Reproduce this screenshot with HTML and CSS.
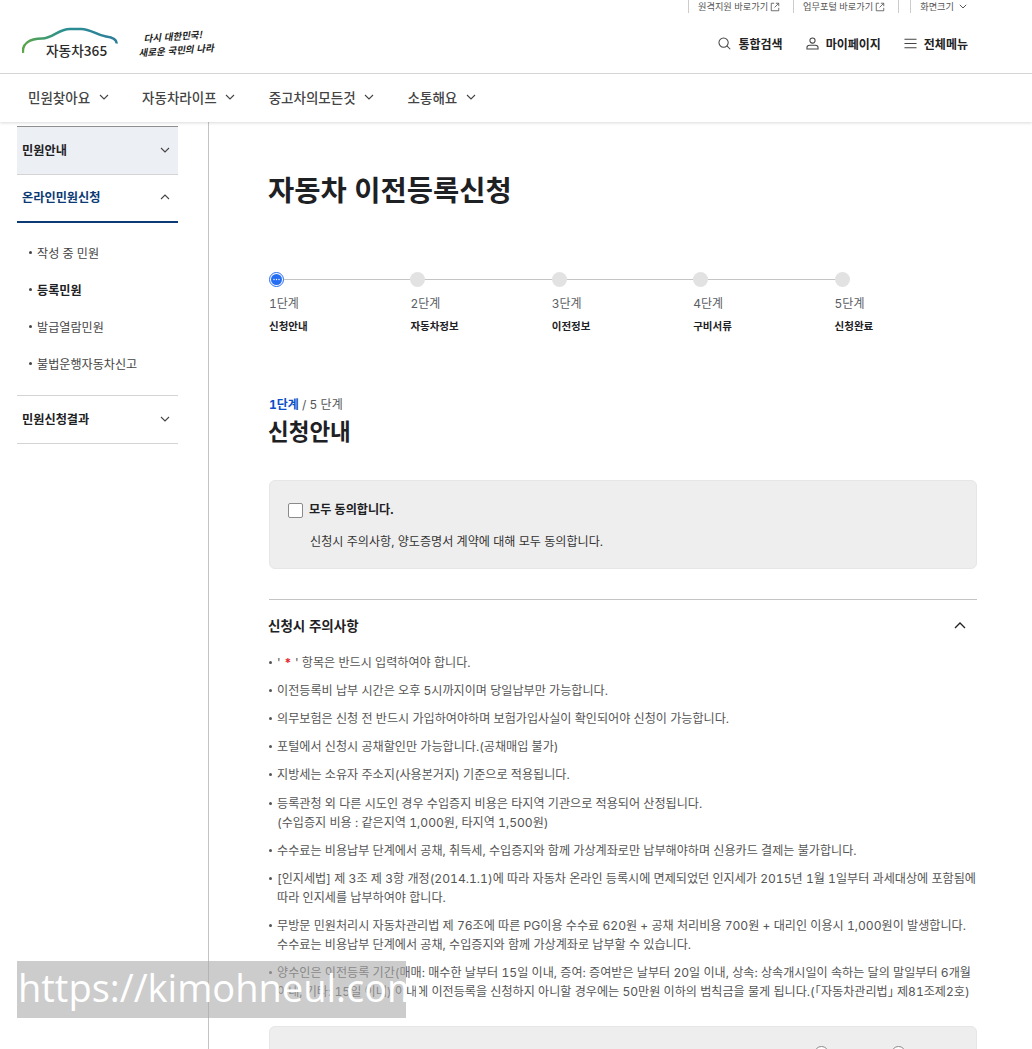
FILE: index.html
```html
<!DOCTYPE html>
<html lang="ko">
<head>
  <meta charset="UTF-8">
  <title>자동차 이전등록신청</title>
  <link rel="stylesheet" href="styles.css">
</head>
<body>
  <header class="site-header">
    <div class="util-bar">
      <a class="util-link">원격지원 바로가기
        <svg class="ext-icon" viewBox="0 0 12 12"><path d="M5 1.500H1.500v9h9V7M7 1.500h3.500V5M10.500 1.500 5.500 6.500"/></svg>
      </a>
      <a class="util-link">업무포털 바로가기
        <svg class="ext-icon" viewBox="0 0 12 12"><path d="M5 1.500H1.500v9h9V7M7 1.500h3.500V5M10.500 1.500 5.500 6.500"/></svg>
      </a>
      <span class="util-empty"></span>
      <a class="util-link util-last">화면크기
        <svg class="mini-chev" viewBox="0 0 8 5"><path d="M.8.8 4 4l3.200-3.200"/></svg>
      </a>
    </div>
    <div class="brand-row">
      <div class="brand">
        <div class="logo">
          <svg class="logo-car" viewBox="0 0 96 28">
            <defs>
              <linearGradient id="carGrad" x1="0" x2="1" y1="0" y2="0">
                <stop offset="0" stop-color="#5aa648"/>
                <stop offset="0.45" stop-color="#2a8f93"/>
                <stop offset="1" stop-color="#2f7d9a"/>
              </linearGradient>
            </defs>
            <path d="M1 26C0 17 7 11.500 20 11.500c11 0 16-9.500 28-9.500h11c10 0 15 6 25 7.500 7 1 11 3 10.500 7" fill="none" stroke="url(#carGrad)" stroke-width="2.500"/>
          </svg>
          <span class="logo-text">자동차365</span>
        </div>
        <div class="slogan"><span>다시 대한민국!</span><span>새로운 국민의 나라</span></div>
      </div>
      <nav class="quick-menu">
        <a class="quick-item">
          <svg viewBox="0 0 14 14"><circle cx="6" cy="6" r="5"/><path d="m9.600 9.600 3.600 3.600"/></svg>통합검색
        </a>
        <a class="quick-item">
          <svg viewBox="0 0 14 14"><circle cx="7" cy="3.800" r="2.800"/><path d="M1 13v-1.500C1 10 2.500 9 4 9h6c1.500 0 3 1 3 2.500V13z"/></svg>마이페이지
        </a>
        <a class="quick-item">
          <svg viewBox="0 0 14 14"><path d="M.5 2.500h13M.5 7h13M.5 11.500h13"/></svg>전체메뉴
        </a>
      </nav>
    </div>
    <nav class="gnb">
      <a class="gnb-item">민원찾아요<svg viewBox="0 0 10 6"><path d="m1 1 4 4 4-4"/></svg></a>
      <a class="gnb-item">자동차라이프<svg viewBox="0 0 10 6"><path d="m1 1 4 4 4-4"/></svg></a>
      <a class="gnb-item">중고차의모든것<svg viewBox="0 0 10 6"><path d="m1 1 4 4 4-4"/></svg></a>
      <a class="gnb-item">소통해요<svg viewBox="0 0 10 6"><path d="m1 1 4 4 4-4"/></svg></a>
    </nav>
  </header>

  <div class="page">
    <aside class="side">
      <div class="side-title side-first">민원안내<svg viewBox="0 0 10 6"><path d="m1 1 4 4 4-4"/></svg></div>
      <div class="side-title side-open">온라인민원신청<svg viewBox="0 0 10 6"><path d="m1 5 4-4 4 4"/></svg></div>
      <ul class="side-sub">
        <li>작성 중 민원</li>
        <li class="current">등록민원</li>
        <li>발급열람민원</li>
        <li>불법운행자동차신고</li>
      </ul>
      <div class="side-title side-last">민원신청결과<svg viewBox="0 0 10 6"><path d="m1 1 4 4 4-4"/></svg></div>
    </aside>

    <main class="content">
      <h1 class="page-title">자동차 이전등록신청</h1>

      <ol class="steps">
        <li class="step active">
          <span class="dot">
            <svg viewBox="0 0 11 11"><circle cx="5.500" cy="5.500" r="5.500" class="dot-bg"/><circle cx="3" cy="5.500" r=".7" class="dot-mark"/><circle cx="5.500" cy="5.500" r=".7" class="dot-mark"/><circle cx="8" cy="5.500" r=".7" class="dot-mark"/></svg>
          </span>
          <span class="step-no">1단계</span>
          <strong>신청안내</strong>
        </li>
        <li class="step">
          <span class="dot"></span>
          <span class="step-no">2단계</span>
          <strong>자동차정보</strong>
        </li>
        <li class="step">
          <span class="dot"></span>
          <span class="step-no">3단계</span>
          <strong>이전정보</strong>
        </li>
        <li class="step">
          <span class="dot"></span>
          <span class="step-no">4단계</span>
          <strong>구비서류</strong>
        </li>
        <li class="step last">
          <span class="dot"></span>
          <span class="step-no">5단계</span>
          <strong>신청완료</strong>
        </li>
      </ol>

      <p class="step-count"><b>1단계</b> / 5 단계</p>
      <h2 class="section-title">신청안내</h2>

      <div class="agree-box">
        <label class="agree-check"><span class="checkbox"></span>모두 동의합니다.</label>
        <p>신청시 주의사항, 양도증명서 계약에 대해 모두 동의합니다.</p>
      </div>

      <section class="notice">
        <div class="notice-head">
          <h3>신청시 주의사항</h3>
          <svg viewBox="0 0 12 7"><path d="m1 6 5-5 5 5"/></svg>
        </div>
        <ul class="notice-list">
          <li>' <em>*</em> ' 항목은 반드시 입력하여야 합니다.</li>
          <li>이전등록비 납부 시간은 오후 5시까지이며 당일납부만 가능합니다.</li>
          <li>의무보험은 신청 전 반드시 가입하여야하며 보험가입사실이 확인되어야 신청이 가능합니다.</li>
          <li>포털에서 신청시 공채할인만 가능합니다.(공채매입 불가)</li>
          <li>지방세는 소유자 주소지(사용본거지) 기준으로 적용됩니다.</li>
          <li>등록관청 외 다른 시도인 경우 수입증지 비용은 타지역 기관으로 적용되어 산정됩니다.<br>(수입증지 비용 : 같은지역 1,000원, 타지역 1,500원)</li>
          <li>수수료는 비용납부 단계에서 공채, 취득세, 수입증지와 함께 가상계좌로만 납부해야하며 신용카드 결제는 불가합니다.</li>
          <li>[인지세법] 제 3조 제 3항 개정(2014.1.1)에 따라 자동차 온라인 등록시에 면제되었던 인지세가 2015년 1월 1일부터 과세대상에 포함됨에 따라 인지세를 납부하여야 합니다.</li>
          <li>무방문 민원처리시 자동차관리법 제 76조에 따른 PG이용 수수료 620원 + 공채 처리비용 700원 + 대리인 이용시 1,000원이 발생합니다.<br>수수료는 비용납부 단계에서 공채, 수입증지와 함께 가상계좌로 납부할 수 있습니다.</li>
          <li>양수인은 이전등록 기간(매매: 매수한 날부터 15일 이내, 증여: 증여받은 날부터 20일 이내, 상속: 상속개시일이 속하는 달의 말일부터 6개월 이내, 기타: 15일 이내) 이내에 이전등록을 신청하지 아니할 경우에는 50만원 이하의 범칙금을 물게 됩니다.(｢자동차관리법｣ 제81조제2호)</li>
        </ul>
      </section>

      <div class="confirm-box">
        <span class="radio"></span>
        <span class="radio"></span>
      </div>
    </main>
  </div>

  <div class="watermark">https://kimohneul.com</div>
</body>
</html>
```

FILE: styles.css
```css
* {
  box-sizing: border-box;
}

html, body {
  margin: 0;
  height: 1049px;
  overflow: hidden;
}

body {
  position: relative;
  font-family: Inter, "Noto Sans CJK KR", "Noto Sans", sans-serif;
  font-size: 12px;
  font-variant-numeric: tabular-nums;
  color: #1e2124;
  background-color: #fff;
}

ul, ol {
  list-style: none;
  margin: 0;
  padding: 0;
}

svg {
  fill: none;
  stroke: currentColor;
  flex: none;
}

/* header */
.site-header {
  position: relative;
  z-index: 2;
  background-color: #fff;
  box-shadow: 0 1px 3px rgba(0, 0, 0, 0.15);
}

.util-bar {
  display: flex;
  justify-content: flex-end;
  height: 13px;
  padding-right: 65px;
  font-size: 9.200px;
  line-height: 13px;
  color: #555;
}

.util-link {
  display: flex;
  align-items: center;
  gap: 2px;
  padding-left: 9px;
  margin-right: 13px;
  border-left: 1px solid #ccc;
}

.util-last {
  margin-right: 0;
}

.util-empty {
  width: 12px;
  border-left: 1px solid #ccc;
}

.ext-icon {
  width: 10px;
  height: 10px;
  stroke-width: 1;
}

.mini-chev {
  width: 8px;
  height: 5px;
  margin-left: 3px;
  stroke-width: 1;
}

.brand-row {
  display: flex;
  justify-content: space-between;
  align-items: center;
  height: 61px;
  padding: 0 64px 0 22px;
  border-bottom: 1px solid #d4d4d4;
}

.brand {
  display: flex;
  align-items: center;
  gap: 20px;
}

.logo {
  position: relative;
  width: 96px;
  height: 32px;
}

.logo-car {
  width: 96px;
  height: 28px;
}

.logo-text {
  position: absolute;
  left: 24px;
  top: 13px;
  font-family: "Noto Sans CJK KR", sans-serif;
  font-size: 13.700px;
  font-weight: 500;
  line-height: 20px;
  color: #2b2b2b;
}

.slogan {
  display: flex;
  flex-direction: column;
  font-family: "Noto Sans CJK KR", sans-serif;
  font-size: 9.500px;
  font-style: italic;
  font-weight: 700;
  line-height: 14px;
  color: #222;
  transform: rotate(-4deg);
}

.slogan span:first-child {
  padding-left: 6px;
}

.quick-menu {
  display: flex;
  gap: 23px;
}

.quick-item {
  display: flex;
  align-items: center;
  gap: 7px;
  font-size: 12px;
  font-weight: 700;
  color: #222;
}

.quick-item svg {
  width: 13px;
  height: 13px;
  color: #444;
  stroke-width: 1.100;
}

.gnb {
  display: flex;
  gap: 33.500px;
  height: 48px;
  padding: 0 0 2px 28px;
  align-items: center;
}

.gnb-item {
  display: flex;
  align-items: center;
  gap: 8.500px;
  font-size: 13.500px;
  font-weight: 500;
  color: #444;
}

.gnb-item svg {
  width: 10px;
  height: 6px;
  stroke-width: 1.100;
}

/* layout */
.page {
  display: flex;
  height: 927px;
}

.side {
  width: 209px;
  padding: 4px 30px 0 17px;
  border-right: 1px solid #c4c4c4;
}

.side-title {
  display: flex;
  justify-content: space-between;
  align-items: center;
  padding: 0 8px 2px 5px;
  font-size: 12.200px;
  font-weight: 700;
  color: #1e2124;
}

.side-title svg {
  width: 10px;
  height: 6px;
  color: #444;
  stroke-width: 1.100;
}

.side-first {
  height: 49px;
  background-color: #eceff4;
  border-top: 1px solid #8f8f8f;
  border-bottom: 1px solid #d4d4d4;
}

.side-open {
  height: 48px;
  color: #0b3a75;
  border-bottom: 2px solid #0b3a75;
}

.side-last {
  height: 49px;
  border-top: 1px solid #d4d4d4;
  border-bottom: 1px solid #d4d4d4;
}

.side-sub {
  padding: 11px 0 13px;
}

.side-sub li {
  display: flex;
  align-items: center;
  height: 37px;
  padding-left: 12px;
  font-size: 12.100px;
  color: #444;
}

.side-sub li::before {
  content: "";
  width: 3px;
  height: 3px;
  margin-right: 5px;
  border-radius: 50%;
  background-color: #444;
}

.side-sub .current {
  font-weight: 700;
  color: #1e2124;
}

.content {
  flex: none;
  width: 708px;
  margin-left: 60px;
}

.page-title {
  margin: 50px 0 0 -1px;
  font-size: 28.500px;
  font-weight: 700;
  line-height: 38px;
  color: #1e2124;
}

/* steps */
.steps {
  display: flex;
  margin-top: 62px;
}

.step {
  position: relative;
  display: flex;
  flex-direction: column;
  width: 141.400px;
}

.step::before {
  content: "";
  position: absolute;
  left: 8px;
  right: -8px;
  top: 7px;
  height: 1px;
  background-color: #c4c4c4;
}

.step.last::before {
  display: none;
}

.dot {
  position: relative;
  display: flex;
  align-items: center;
  justify-content: center;
  width: 15px;
  height: 15px;
  border-radius: 50%;
  background-color: #e2e2e2;
}

.active .dot {
  background-color: #fff;
  border: 1px solid #256ef4;
}

.dot svg {
  width: 11px;
  height: 11px;
  stroke: none;
}

.dot-bg {
  fill: #256ef4;
}

.dot-mark {
  fill: #fff;
}

.step-no {
  margin-top: 8px;
  font-size: 12px;
  line-height: 18px;
  color: #5a5e63;
}

.step strong {
  margin-top: 6px;
  font-size: 10.500px;
  font-weight: 700;
  line-height: 16px;
  color: #1e2124;
}

.step-count {
  margin: 62px 0 0;
  font-size: 12px;
  line-height: 16px;
  color: #555;
}

.step-count b {
  color: #0b50c8;
}

.section-title {
  margin: 4px 0 0 -1px;
  font-size: 22.500px;
  font-weight: 700;
  line-height: 30px;
  color: #1e2124;
}

/* agree box */
.agree-box {
  height: 89px;
  margin-top: 33px;
  padding: 20px 18px 0;
  background-color: #eee;
  border: 1px solid #e6e6e6;
  border-radius: 6px;
}

.agree-check {
  display: flex;
  align-items: center;
  gap: 6px;
  font-size: 12.100px;
  font-weight: 700;
  line-height: 18px;
}

.checkbox {
  width: 15px;
  height: 15px;
  background-color: #fff;
  border: 1px solid #8a8a8a;
  border-radius: 2px;
}

.agree-box p {
  margin: 14px 0 0 22px;
  font-size: 12.100px;
  line-height: 18px;
  color: #333;
}

/* notice */
.notice {
  margin-top: 30px;
  border-top: 1px solid #c4c4c4;
}

.notice-head {
  display: flex;
  justify-content: space-between;
  align-items: center;
  height: 52px;
  padding: 0 11px 2px 0;
}

.notice-head h3 {
  margin: 0 0 0 -1px;
  font-size: 13.500px;
  font-weight: 700;
}

.notice-head svg {
  width: 12px;
  height: 7px;
  stroke-width: 1.300;
}

.notice-list {
  padding-top: 0.600px;
  font-size: 12.100px;
  line-height: 19px;
  color: #555;
}

.notice-list li {
  position: relative;
  margin-bottom: 9.200px;
  padding-left: 8px;
}

.notice-list li::before {
  content: "";
  position: absolute;
  left: 0;
  top: 8px;
  width: 3px;
  height: 3px;
  border-radius: 50%;
  background-color: #555;
}

.notice-list em {
  font-style: normal;
  font-weight: 700;
  color: #e5252a;
}

.confirm-box {
  display: flex;
  justify-content: flex-end;
  gap: 62px;
  height: 60px;
  margin-top: 25px;
  padding: 19px 70px 0 0;
  background-color: #eee;
  border: 1px solid #e6e6e6;
  border-radius: 6px;
}

.radio {
  width: 15px;
  height: 15px;
  background-color: #fff;
  border: 1px solid #8a8a8a;
  border-radius: 50%;
}

.watermark {
  position: absolute;
  left: 17px;
  top: 961px;
  z-index: 3;
  width: 389px;
  height: 57px;
  padding-left: 1px;
  font-family: "Open Sans", sans-serif;
  font-size: 38px;
  line-height: 53px;
  color: #fff;
  white-space: nowrap;
  background-color: rgba(170, 170, 170, 0.6);
}
```
